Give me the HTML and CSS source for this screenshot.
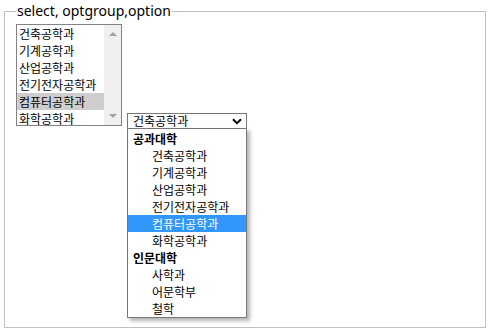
FILE: index.html
```html
<html>
    <head>
        <meta charset="UTF-8">
        <meta name="viewport" content="width=device-width, initial-scale=1.0">

        <title>select, optgroup, option</title>

        <link rel="stylesheet" href="styles.css">
    </head>

    <body>
        <fieldset class="box">
            <legend>select, optgroup,option</legend>

            <div class="row">
                <div class="listbox" role="listbox">
                    <ul class="options">
                        <li>건축공학과</li>
                        <li>기계공학과</li>
                        <li>산업공학과</li>
                        <li>전기전자공학과</li>
                        <li class="picked">컴퓨터공학과</li>
                        <li>화학공학과</li>
                    </ul>
                    <div class="scrollbar">
                        <span class="arrow up"></span>
                        <span class="arrow down"></span>
                    </div>
                </div>

                <div class="dropdown">
                    <div class="current">
                        <span>건축공학과</span>
                        <svg class="chevron" width="10" height="7" viewBox="0 0 10 7">
                            <path d="M1 1.2 L5 5.2 L9 1.2" fill="none" stroke="#000" stroke-width="2"/>
                        </svg>
                    </div>

                    <!-- open popup of the select -->
                    <ul class="popup">
                        <li class="group">공과대학</li>
                        <li>건축공학과</li>
                        <li>기계공학과</li>
                        <li>산업공학과</li>
                        <li>전기전자공학과</li>
                        <li class="hover">컴퓨터공학과</li>
                        <li>화학공학과</li>
                        <li class="group">인문대학</li>
                        <li>사학과</li>
                        <li>어문학부</li>
                        <li>철학</li>
                    </ul>
                </div>
            </div>
        </fieldset>
    </body>
</html>
```

FILE: styles.css
```css
body{
    margin: 0;
    padding: 3px 6px 4px 4px;
    background-color: #fff;
    font-family: "Noto Sans", "Noto Sans CJK KR", sans-serif;
    color: #000;
}
.box{
    margin: 0;
    height: 325px;
    box-sizing: border-box;
    border: 1px solid #c0c0c0;
    padding: 5px 11px 0 11px;
}
legend{
    font-size: 14px;
    line-height: 16px;
    padding: 0 1px;
    margin-left: 0;
}
.row{
    display: flex;
    align-items: flex-end;
    gap: 5px;
}
.listbox{
    position: relative;
    width: 106px;
    height: 102px;
    box-sizing: border-box;
    border: 1px solid #828282;
    overflow: hidden;
    margin-bottom: 3px;
}
ul{
    list-style: none;
    margin: 0;
    padding: 0;
}
.options li,
.popup li,
.current{
    font-family: "Noto Sans CJK KR", sans-serif;
    font-size: 12px;
    line-height: 17px;
    height: 17px;
    white-space: nowrap;
}
.options li{
    padding-left: 2px;
    width: 86px;
}
.options .picked{
    background-color: #cecece;
}
.scrollbar{
    position: absolute;
    top: 0;
    right: 0;
    width: 17px;
    height: 100%;
    background-color: #f0f0f0;
}
.arrow{
    position: absolute;
    left: 5px;
    width: 0;
    height: 0;
    border-left: 4px solid transparent;
    border-right: 4px solid transparent;
}
.arrow.up{
    top: 7px;
    border-bottom: 4px solid #a3a3a3;
}
.arrow.down{
    bottom: 7px;
    border-top: 4px solid #a3a3a3;
}
.dropdown{
    position: relative;
    width: 120px;
}
.current{
    display: flex;
    align-items: center;
    justify-content: space-between;
    height: 16px;
    line-height: 14px;
    box-sizing: border-box;
    border: 1px solid #767676;
    padding: 0 4px 0 5px;
}
.chevron{
    display: block;
}
.popup{
    position: absolute;
    top: 15px;
    left: 0;
    width: 120px;
    box-sizing: border-box;
    border: 1px solid #767676;
    padding: 1px 0 0 0;
    background-color: #fff;
    box-shadow: 3px 3px 4px rgba(0, 0, 0, 0.3);
}
.popup li{
    padding-left: 24px;
}
.popup .group{
    font-weight: bold;
    padding-left: 5px;
}
.popup .hover{
    background-color: #3297fd;
    color: #fff;
}
```
